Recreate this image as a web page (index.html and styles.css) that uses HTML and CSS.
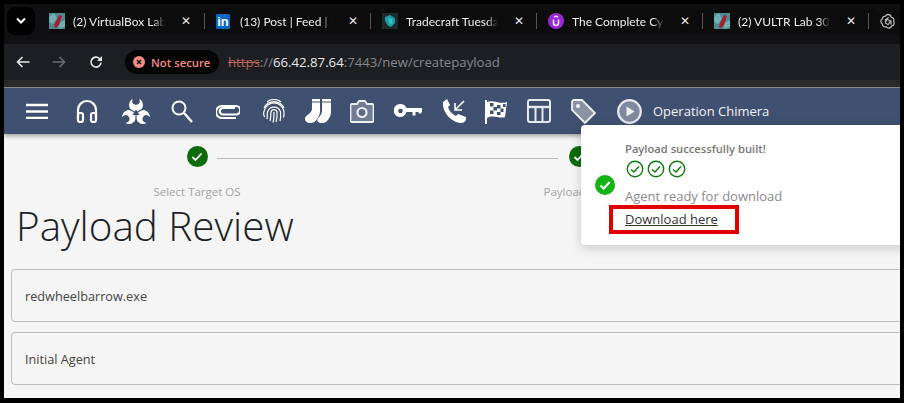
FILE: index.html
```html
<!DOCTYPE html>
<html lang="en">
<head>
<meta charset="utf-8">
<title>Operation Chimera</title>
<link rel="stylesheet" href="styles.css">
</head>
<body>
<div class="frame">
  <div class="tabbar">
    <div class="tabmenu"><svg width="12" height="8" viewBox="0 0 12 8"><path d="M2 1.500l4 4 4-4" fill="none" stroke="#fff" stroke-width="2"/></svg></div>
    <div class="tab tab-first">
      <svg class="fav" width="16" height="16" viewBox="0 0 16 16"><rect width="16" height="16" fill="#4f8a94"/><path d="M0 4l5-4 3 6-4 5-4-2zM12 9l4-2v6l-5 3-2-3z" fill="#6fb0b4"/><path d="M5 14l1-4 4-8 3 1-3 9-3 3z" fill="#a3202c"/></svg>
      <span class="tabtitle">(2) VirtualBox Lab</span><span class="close">✕</span>
    </div>
    <div class="tab">
      <span class="fav li">in</span>
      <span class="tabtitle">(13) Post | Feed | L</span><span class="close">✕</span>
    </div>
    <div class="tab">
      <svg class="fav" width="16" height="16" viewBox="0 0 16 16"><rect width="16" height="16" fill="#1d2a2c"/><path d="M3 4l5-2 5 3v5l-4 4-3-1-3-5z" fill="#1c9aa2"/><path d="M6 5l4 1 1 4-3 2z" fill="#37c0bf"/></svg>
      <span class="tabtitle">Tradecraft Tuesday</span><span class="close">✕</span>
    </div>
    <div class="tab">
      <svg class="fav" width="16" height="16" viewBox="0 0 16 16"><circle cx="8" cy="8" r="8" fill="#9a28d8"/><path d="M5.500 6.500V10a2.500 2.500 0 0 0 5 0V6.500" fill="none" stroke="#fff" stroke-width="1.500"/><path d="M6 4.200l2-1.200 2 1.200" fill="none" stroke="#fff" stroke-width="1.100"/></svg>
      <span class="tabtitle">The Complete Cyb</span><span class="close">✕</span>
    </div>
    <div class="tab">
      <svg class="fav" width="16" height="16" viewBox="0 0 16 16"><rect width="16" height="16" fill="#4f8a94"/><path d="M0 4l5-4 3 6-4 5-4-2zM12 9l4-2v6l-5 3-2-3z" fill="#6fb0b4"/><path d="M5 14l1-4 4-8 3 1-3 9-3 3z" fill="#a3202c"/></svg>
      <span class="tabtitle">(2) VULTR Lab 30-</span><span class="close">✕</span>
    </div>
    <div class="tab tab-last">
      <svg class="fav" width="16" height="16" viewBox="0 0 16 16" fill="none" stroke="#b4b4b4" stroke-width="1.300"><path d="M8 1.500a3 3 0 0 1 3 2.600 3 3 0 0 1 2.600 4.300 3 3 0 0 1-2 4.600 3 3 0 0 1-5.200.9 3 3 0 0 1-4-2.800 3 3 0 0 1 0-5.200 3 3 0 0 1 3-2.800A3 3 0 0 1 8 1.500z"/><path d="M6 5.500l5 3v3M5.500 9l3-5M8 12l3-5M5.500 6v4l3 2"/></svg>
    </div>
  </div>

  <div class="addressbar">
    <svg class="tool" width="14" height="12" viewBox="0 0 14 12"><path d="M13.500 6H1.500M6.500 1l-5 5 5 5" fill="none" stroke="#e6e6e6" stroke-width="1.600"/></svg>
    <svg class="tool" width="14" height="12" viewBox="0 0 14 12"><path d="M.5 6h12M7.500 1l5 5-5 5" fill="none" stroke="#6a6b6e" stroke-width="1.600"/></svg>
    <svg class="tool" width="14" height="14" viewBox="0 0 14 14"><path d="M12 7.500a5 5 0 1 1-1.500-4L12.500 5.500" fill="none" stroke="#e6e6e6" stroke-width="1.600"/><path d="M13 1v5H8z" fill="#e6e6e6"/></svg>
    <div class="secure">
      <svg width="12" height="12" viewBox="0 0 12 12"><circle cx="6" cy="6" r="6" fill="#f28b82"/><path d="M4 4l4 4M8 4l-4 4" stroke="#1a1a1a" stroke-width="1.500"/></svg>
      <span>Not secure</span>
    </div>
    <div class="url"><span class="scheme">https</span><span>://</span><span class="host">66.42.87.64</span><span>:7443/new/createpayload</span></div>
  </div>
  <div class="strip"></div>

  <nav class="nav">
    <svg width="22" height="16" viewBox="0 0 22 16"><path d="M0 2h22M0 8.500h22M0 15h22" stroke="#fff" stroke-width="2.400"/></svg>
    <svg class="g8" width="22" height="24" viewBox="0 0 22 24" fill="none" stroke="#fff" stroke-width="2.200"><path d="M2 20V11a9 9 0 0 1 18 0v9"/><rect x="2" y="14" width="5" height="9" rx="2"/><rect x="15" y="14" width="5" height="9" rx="2"/></svg>
    <svg class="g4" width="28" height="26" viewBox="0 0 28 26">
      <g fill="#fff"><circle cx="14" cy="7" r="7"/><circle cx="14" cy="7" r="7" transform="rotate(120 14 15)"/><circle cx="14" cy="7" r="7" transform="rotate(240 14 15)"/></g>
      <g fill="#3f5070"><circle cx="14" cy="3" r="3.800"/><circle cx="14" cy="3" r="3.800" transform="rotate(120 14 15)"/><circle cx="14" cy="3" r="3.800" transform="rotate(240 14 15)"/></g>
      <circle cx="14" cy="15" r="5.500" fill="#fff"/>
      <path d="M14 11.500l3.500 5.500h-7z" fill="#3f5070"/>
      <g stroke="#3f5070" stroke-width="1.200"><path d="M14 15v10"/><path d="M14 15v10" transform="rotate(120 14 15)"/><path d="M14 15v10" transform="rotate(240 14 15)"/></g>
    </svg>
    <svg class="g1" width="22" height="24" viewBox="0 0 22 24" fill="none" stroke="#fff"><circle cx="8" cy="9" r="6.500" stroke-width="2"/><path d="M13 14l8 9" stroke-width="2.400"/></svg>
    <svg class="g3" width="24" height="16" viewBox="0 0 24 16" fill="none" stroke="#fff" stroke-width="2.200"><path d="M19 5H7a3 3 0 0 0 0 6.500h13a2.500 2.500 0 0 0 0-8.500H6a5 5 0 0 0 0 12h14"/></svg>
    <svg class="g3" width="22" height="24" viewBox="0 0 22 24" fill="none" stroke="#fff" stroke-width="1.200"><path d="M4 3a11 11 0 0 1 14 0"/><path d="M1 9a11 11 0 0 1 20 0"/><path d="M1.500 18c-1-2-.8-5-.2-6.500a10 10 0 0 1 19.400 0c.4 2 .4 5-.2 7"/><path d="M4 20c.5-2 0-5 .5-7a6.800 6.800 0 0 1 13 0c.3 3 .2 6-.5 9"/><path d="M7 22c1-3 .5-6 1-9a3.100 3.100 0 0 1 6 0c.3 3 0 7-1 10"/><path d="M10 23.500c1-3 1-7 1-10.500"/></svg>
    <svg width="26" height="24" viewBox="0 0 26 24"><g fill="#fff"><path d="M7 0h8v2.500H7zM17 0h9v2.500h-9z"/><path d="M7 3.500h8V12c0 3-1 5-3 8-2 3-4 4-7 4-3 0-5-2-5-4 0-3 3-4 5-6 1.500-1.500 2-3 2-5z"/><path d="M17 3.500h9V13c0 4-2 7-4 9-1 1.500-3 2-5.500 2-3 0-5-2-4-4l2.500-3c1.500-2 2-3.500 2-6z"/></g></svg>
    <svg class="g-1" width="24" height="24" viewBox="0 0 24 24"><path d="M2 5h5l2-3h6l2 3h5a1.500 1.500 0 0 1 1.500 1.500v15a1.500 1.500 0 0 1-1.500 1.500H2a1.500 1.500 0 0 1-1.500-1.500v-15A1.500 1.500 0 0 1 2 5z" fill="#707c94" stroke="#eceef2" stroke-width="1.800"/><circle cx="12" cy="13.500" r="4.500" fill="#5c6a85" stroke="#eceef2" stroke-width="2.200"/></svg>
    <svg width="28" height="14" viewBox="0 0 28 14"><path d="M6.500 0a6.500 6.500 0 0 1 6 4H28v4l-2 2-2-2h-2.500v3.500h-3V8h-6a6.500 6.500 0 1 1-6-8z" fill="#fff"/><circle cx="6.500" cy="7" r="2.300" fill="#3f5070"/></svg>
    <svg width="24" height="24" viewBox="0 0 24 24"><path d="M1 3l4-3 3 6-2 2c1 4 4 7 8 9l2-2 8 3v3c-1 2-3 3-5 3C8 23 0 12 1 3z" fill="#fff"/><path d="M22 2l-9 9M13 4v7h7" fill="none" stroke="#fff" stroke-width="1.600"/></svg>
    <svg class="g-1" width="23" height="25" viewBox="0 0 23 25"><path d="M1 1v24" stroke="#fff" stroke-width="2"/><path d="M2 3c6-3 13 3 20 0l-2 15c-6 2-12-3-18 1z" fill="#fff"/><g fill="#3f5070"><rect x="5" y="4" width="3.500" height="3.500"/><rect x="12" y="6" width="3.500" height="3.500"/><rect x="18" y="5" width="2.500" height="3"/><rect x="8.500" y="8" width="3.500" height="3.500"/><rect x="15.500" y="9.500" width="3" height="3.500"/><rect x="5" y="11.500" width="3.500" height="3.500"/><rect x="12" y="13" width="3.500" height="3"/></g></svg>
    <svg class="g-1" width="24" height="24" viewBox="0 0 24 24" fill="none" stroke="#e6e9ef" stroke-width="2"><rect x="1" y="1" width="22" height="22" rx="2"/><path d="M1 8h22" stroke-width="2.400"/><path d="M8.500 8v15M15.500 8v15"/></svg>
    <svg width="25" height="25" viewBox="0 0 25 25"><path d="M3 1h8l13 13-10 10L1 11V3a2 2 0 0 1 2-2z" fill="#8a93a6" stroke="#f2f3f6" stroke-width="1.800"/><circle cx="7" cy="7" r="2" fill="#f2f3f6"/></svg>
    <svg class="g1" width="25" height="25" viewBox="0 0 25 25"><circle cx="12.500" cy="12.500" r="11.300" fill="#7f889c" stroke="#e8eaef" stroke-width="2.200"/><path d="M9.500 7.500l8 5-8 5z" fill="#eef0f4"/></svg>
    <span class="opname">Operation Chimera</span>
  </nav>

  <main class="content">
    <div class="stepper">
      <div class="step">
        <span class="stepdot"><svg width="12" height="10" viewBox="0 0 12 10"><path d="M1.500 5l3 3 6-6.500" fill="none" stroke="#fff" stroke-width="1.800"/></svg></span>
        <span class="steplabel">Select Target OS</span>
      </div>
      <div class="stepline"></div>
      <div class="step">
        <span class="stepdot"><svg width="12" height="10" viewBox="0 0 12 10"><path d="M1.500 5l3 3 6-6.500" fill="none" stroke="#fff" stroke-width="1.800"/></svg></span>
        <span class="steplabel">Payload Type</span>
      </div>
    </div>
    <h1 class="title">Payload Review</h1>
    <div class="card">redwheelbarrow.exe</div>
    <div class="card">Initial Agent</div>

    <aside class="toast">
      <svg class="toastok" width="20" height="20" viewBox="0 0 20 20"><circle cx="10" cy="10" r="10" fill="#12b312"/><path d="M5.500 10.500l3.200 3 6-6.500" fill="none" stroke="#fff" stroke-width="2"/></svg>
      <div class="toastbody">
        <div class="toasthead">Payload successfully built!</div>
        <div class="toastchecks">
          <svg width="18" height="18" viewBox="0 0 18 18"><circle cx="9" cy="9" r="7.700" fill="none" stroke="#107a10" stroke-width="1.400"/><path d="M5 9.500l3 2.500 5-5.500" fill="none" stroke="#107a10" stroke-width="1.400"/></svg>
          <svg width="18" height="18" viewBox="0 0 18 18"><circle cx="9" cy="9" r="7.700" fill="none" stroke="#107a10" stroke-width="1.400"/><path d="M5 9.500l3 2.500 5-5.500" fill="none" stroke="#107a10" stroke-width="1.400"/></svg>
          <svg width="18" height="18" viewBox="0 0 18 18"><circle cx="9" cy="9" r="7.700" fill="none" stroke="#107a10" stroke-width="1.400"/><path d="M5 9.500l3 2.500 5-5.500" fill="none" stroke="#107a10" stroke-width="1.400"/></svg>
        </div>
        <div class="toastmsg">Agent ready for download</div>
        <a class="toastlink" href="#">Download here</a>
      </div>
    </aside>
  </main>
</div>
</body>
</html>
```
FILE: styles.css
```css
*, *::before, *::after { box-sizing: border-box; }
html, body { margin: 0; padding: 0; background: #000; }
body { width: 904px; height: 403px; overflow: hidden; font-family: "Open Sans", "Noto Sans", sans-serif; }
svg { display: block; flex: none; }

.frame { margin: 4px 4px 5px; height: 394px; display: flex; flex-direction: column; overflow: hidden; background: #f5f5f5; }

.tabbar { height: 40px; background: #101012; display: flex; align-items: center; padding: 0 0 6px 3px; flex: none; }
.tabmenu { width: 28px; height: 28px; flex: none; border-radius: 8px; background: #020202; display: flex; align-items: center; justify-content: center; margin-right: 14px; }
.tab { width: 166px; flex: none; height: 26px; display: flex; align-items: center; position: relative; color: #eee; font-family: Lato, "Open Sans", sans-serif; font-size: 12px; background: #0c0c0d; border-radius: 8px 8px 0 0; }
.tab-first { width: 167px; }
.tab::after { content: ""; position: absolute; right: 11px; top: 5px; height: 16px; width: 1px; background: #55565a; }
.tab-last { width: 20px; }
.tab-last::after { display: none; }
.fav { width: 16px; height: 16px; flex: none; }
.li { width: 14px; height: 15px; background: #0a66c2; color: #fff; font: bold 13px/15px "Liberation Sans", sans-serif; text-align: center; border-radius: 1px; margin-right: 2px; }
.tabtitle { margin-left: 8px; width: 92px; flex: none; white-space: nowrap; -webkit-mask-image: linear-gradient(90deg, #000 88%, transparent 100%); mask-image: linear-gradient(90deg, #000 88%, transparent 100%); }
.close { margin-left: 15px; width: 12px; text-align: center; font: 12px/1 "DejaVu Sans", sans-serif; color: #e8e8e8; }

.addressbar { height: 36px; background: #1d1e22; display: flex; align-items: center; flex: none; padding-left: 12px; }
.addressbar .tool:nth-child(1) { margin-right: 22px; }
.addressbar .tool:nth-child(2) { margin-right: 23px; }
.addressbar .tool:nth-child(3) { margin-right: 22px; }
.secure { width: 94px; height: 24px; flex: none; border-radius: 12px; background: #050505; display: flex; align-items: center; gap: 6px; padding-left: 8px; color: #f28b82; font-size: 11.300px; font-weight: 600; }
.url { margin-left: 9px; font: 13.200px "Open Sans", sans-serif; color: #85878c; white-space: nowrap; }
.scheme { color: #b8625b; text-decoration: line-through; }
.host { color: #e8e8e8; }

.strip { height: 8px; flex: none; background: #2a2a2b; border-bottom: 1px solid #8a8c90; }

.nav { height: 46px; flex: none; background: #3f5070; display: flex; align-items: center; gap: 20px; padding-left: 22px; box-shadow: 0 2px 4px rgba(0,0,0,.35); position: relative; }
.g8 { margin-left: 8px; }
.g4 { margin-left: 4px; }
.g3 { margin-left: 3px; }
.g1 { margin-left: 1px; }
.g-1 { margin-left: -1px; }
.opname { margin-left: -9px; color: #f0f2f5; font-size: 13px; }

.content { flex: 1; min-height: 0; position: relative; }
.stepper { display: flex; height: 72px; padding-top: 12px; }
.step { width: 120px; margin-left: 133px; flex: none; display: flex; flex-direction: column; align-items: center; }
.stepline { height: 1px; background: #bbb; width: 341px; margin: 12px -39px 0 -40px; flex: none; }
.step + .stepline + .step { margin-left: 0; }
.stepdot { width: 21px; height: 21px; border-radius: 50%; background: #0b6b0b; display: flex; align-items: center; justify-content: center; }
.steplabel { margin-top: 17px; font-size: 11.500px; color: #a4a4a4; white-space: nowrap; }

.title { margin: -8px 0 0 12px; font-size: 40.400px; line-height: 56px; font-weight: 300; color: #1c1f26; }
.card { margin: 15px -10px 0 7px; height: 53px; border: 1px solid #bdbdbd; border-radius: 4px; display: flex; align-items: center; padding-left: 13px; font-size: 12.700px; color: #444; }
.card + .card { margin-top: 10px; }

.toast { position: absolute; left: 577px; top: -9px; width: 330px; height: 120px; background: #fff; border-radius: 4px; box-shadow: 0 3px 12px rgba(0,0,0,.18); display: flex; align-items: center; padding-left: 14px; }
.toastbody { margin-left: 10px; align-self: flex-start; padding-top: 16px; position: relative; }
.toasthead { font-size: 11.200px; font-weight: 600; color: #777; line-height: 16px; }
.toastchecks { display: flex; gap: 3px; margin: 3px 0 0 1px; }
.toastmsg { margin-top: 9px; font-size: 13px; color: #8a8a8a; line-height: 18px; }
.toastlink { display: inline-block; margin-top: 5px; font-size: 13px; line-height: 18px; color: #333; position: relative; }
.toastlink::after { content: ""; position: absolute; left: -16px; top: -5px; width: 130px; height: 29px; border: 4px solid #e00000; }
```
